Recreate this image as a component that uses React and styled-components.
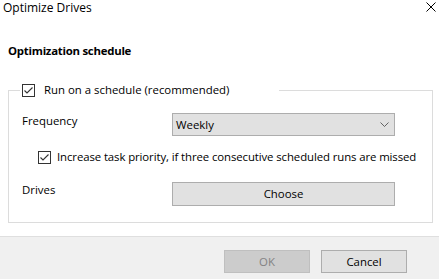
import React from "react";
import styled, { createGlobalStyle } from "styled-components";

const GlobalStyle = createGlobalStyle`
  html, body {
    margin: 0;
    padding: 0;
    background: #ffffff;
  }
  body {
    font-family: "Open Sans", "Noto Sans", "Liberation Sans", sans-serif;
    font-size: 11.4px;
    color: #000000;
  }
`;

const Dialog = styled.div`
  width: 439px;
  height: 279px;
  display: flex;
  flex-direction: column;
  background: #ffffff;
  overflow: hidden;
`;

const TitleBar = styled.div`
  height: 16px;
  display: flex;
  justify-content: space-between;
  align-items: flex-start;
  padding: 0 3px;
  line-height: 16px;
  font-size: 12px;
`;

const CloseButton = styled.div`
  width: 10px;
  height: 10px;
  margin-top: 2px;
  display: flex;
`;

const Body = styled.div`
  padding: 0 6px 0 8px;
`;

const Heading = styled.div`
  margin-top: 27px;
  line-height: 16px;
  font-weight: 700;
  letter-spacing: -0.25px;
`;

const Group = styled.fieldset`
  margin: 24px 0 0 0;
  padding: 0 0 16px 13px;
  width: 425px;
  box-sizing: border-box;
  border: 1px solid #dcdcdc;
  min-width: 0;
`;

const Legend = styled.legend`
  margin-left: -2px;
  padding: 0 0 0 2px;
  width: 259px;
  box-sizing: border-box;
`;

const CheckRow = styled.label`
  display: flex;
  align-items: center;
  gap: ${(p) => p.$gap}px;
  height: 14px;
  line-height: 14px;
  white-space: nowrap;
  letter-spacing: ${(p) => p.$tight ? "-0.1px" : "normal"};
  padding-left: ${(p) => p.$indent || 0}px;
  margin-top: ${(p) => p.$top || 0}px;
`;

const Box = styled.span`
  width: 13px;
  height: 13px;
  box-sizing: border-box;
  border: 1px solid #333333;
  background: #ffffff;
  display: flex;
  align-items: center;
  justify-content: center;
  flex: none;
`;

const FieldRow = styled.div`
  display: grid;
  grid-template-columns: 150px 223px;
  align-items: start;
  margin-top: ${(p) => p.$top}px;
  line-height: 16px;
`;

const Select = styled.div`
  height: 23px;
  box-sizing: border-box;
  border: 1px solid #adadad;
  background: #e1e1e1;
  display: flex;
  align-items: center;
  justify-content: space-between;
  padding: 0 5px 0 3px;
`;

const Button = styled.div`
  height: ${(p) => p.$h || 23}px;
  width: ${(p) => (p.$w ? p.$w + "px" : "auto")};
  box-sizing: border-box;
  border: 1px solid ${(p) => (p.$disabled ? "#bfbfbf" : "#adadad")};
  background: ${(p) => (p.$disabled ? "#cccccc" : "#e1e1e1")};
  color: ${(p) => (p.$disabled ? "#838383" : "#000000")};
  display: flex;
  align-items: center;
  justify-content: center;
`;

const Footer = styled.div`
  margin-top: auto;
  height: 43px;
  box-sizing: border-box;
  border-top: 1px solid #dfdfdf;
  background: #f0f0f0;
  display: flex;
  justify-content: flex-end;
  align-items: flex-start;
  gap: 11px;
  padding: 13px 32px 0 0;
`;

function Check() {
  return (
    <Box>
      <svg width="11" height="11" viewBox="0 0 11 11">
        <path d="M1.5 5.5 L4 8 L9.5 2.5" fill="none" stroke="#333" strokeWidth="1.1" />
      </svg>
    </Box>
  );
}

export default function App() {
  return (
    <>
      <GlobalStyle />
      <Dialog>
        <TitleBar>
          <span>Optimize Drives</span>
          <CloseButton>
            <svg width="10" height="10" viewBox="0 0 10 10">
              <path d="M0.5 0.5 L9.5 9.5 M9.5 0.5 L0.5 9.5" stroke="#000" strokeWidth="1" />
            </svg>
          </CloseButton>
        </TitleBar>
        <Body>
          <Heading>Optimization schedule</Heading>
          <Group>
            <Legend>
              <CheckRow $gap={9}>
                <Check />
                <span>Run on a schedule (recommended)</span>
              </CheckRow>
            </Legend>
            <FieldRow $top={16}>
              <span>Frequency</span>
              <Select>
                <span>Weekly</span>
                <svg width="9" height="5" viewBox="0 0 9 5">
                  <path d="M0.5 0.5 L4.5 4.5 L8.5 0.5" fill="none" stroke="#555" strokeWidth="0.9" />
                </svg>
              </Select>
            </FieldRow>
            <CheckRow $gap={6} $indent={16} $top={14} $tight>
              <Check />
              <span>Increase task priority, if three consecutive scheduled runs are missed</span>
            </CheckRow>
            <FieldRow $top={18}>
              <span>Drives</span>
              <Button $h={24}>Choose</Button>
            </FieldRow>
          </Group>
        </Body>
        <Footer>
          <Button $w={86} $disabled>
            OK
          </Button>
          <Button $w={86}>Cancel</Button>
        </Footer>
      </Dialog>
    </>
  );
}
